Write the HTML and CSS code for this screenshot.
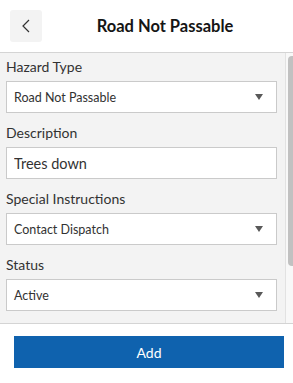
FILE: index.html
```html
<!DOCTYPE html>
<html lang="en">
<head>
    <meta charset="UTF-8">
    <meta name="viewport" content="width=device-width, initial-scale=1.0">
    <title>Road Not Passable</title>
    <link rel="stylesheet" href="styles.css">
</head>
<body>
    <div class="app">
        <header class="topbar">
            <button class="back" aria-label="Back">
                <svg width="8" height="14" viewBox="0 0 8 14">
                    <path d="M7 1 L1 7 L7 13" fill="none" stroke="#323232" stroke-width="1.2"/>
                </svg>
            </button>
            <h1 class="title">Road Not Passable</h1>
        </header>

        <div class="panel">
            <div class="form">
                <div class="field">
                    <label>Hazard Type</label>
                    <div class="select"><span>Road Not Passable</span><span class="arrow"></span></div>
                </div>
                <div class="field">
                    <label>Description</label>
                    <input class="text" type="text" value="Trees down">
                </div>
                <div class="field">
                    <label>Special Instructions</label>
                    <div class="select"><span>Contact Dispatch</span><span class="arrow"></span></div>
                </div>
                <div class="field">
                    <label>Status</label>
                    <div class="select"><span>Active</span><span class="arrow"></span></div>
                </div>
            </div>
            <div class="scrollbar">
                <div class="thumb"></div>
            </div>
        </div>

        <div class="footer">
            <button class="add">Add</button>
        </div>
    </div>
</body>
</html>
```

FILE: styles.css
```css
body {
    margin: 0;
    font-family: Lato, "Open Sans", sans-serif;
    color: #323232;
    background-color: #fff;
}
.app {
    width: 293px;
}
.topbar {
    display: flex;
    align-items: flex-start;
    height: 53px;
    padding-top: 10px;
    box-sizing: border-box;
    border-bottom: 1px solid #d4d4d4;
    background-color: #fff;
}
.back {
    width: 32px;
    height: 32px;
    margin-left: 10px;
    border: none;
    border-radius: 3px;
    background-color: #f3f3f3;
    display: flex;
    align-items: center;
    justify-content: center;
    padding: 0;
}
.title {
    flex: 1;
    margin: 0 5px 0 0;
    text-align: center;
    font-size: 16.5px;
    font-weight: 700;
    line-height: 32px;
    color: #151515;
}
.panel {
    display: flex;
    height: 270px;
    background-color: #f3f3f3;
    border-bottom: 1px solid #d4d4d4;
}
.form {
    flex: 1;
    overflow: hidden;
    padding: 4px 8px 0 6px;
}
.scrollbar {
    width: 7px;
    border-left: 1px solid #e2e2e2;
    background-color: #f8f8f8;
    display: flex;
    justify-content: flex-end;
}
.thumb {
    width: 5px;
    height: 210px;
    margin-top: 3px;
    background-color: #c1c1c1;
    border-radius: 4px 0 0 4px;
}
.field {
    margin-bottom: 10px;
}
.field label {
    display: block;
    font-size: 14px;
    line-height: 20px;
    margin-bottom: 4px;
    color: #323232;
}
.select {
    display: flex;
    align-items: center;
    justify-content: space-between;
    height: 32px;
    box-sizing: border-box;
    border: 1px solid #cacaca;
    background-color: #fff;
    padding: 0 13px 0 7px;
    font-size: 12.5px;
    color: #323232;
}
.arrow {
    width: 0;
    height: 0;
    border-left: 4.5px solid transparent;
    border-right: 4.5px solid transparent;
    border-top: 6px solid #595959;
}
.text {
    display: block;
    width: 100%;
    height: 32px;
    box-sizing: border-box;
    border: 1px solid #cacaca;
    background-color: #fff;
    padding: 0 7px;
    margin: 0;
    font-family: Lato, "Open Sans", sans-serif;
    font-size: 14.5px;
    color: #323232;
}
.footer {
    padding: 12px 9px 0 14px;
}
.add {
    display: block;
    width: 100%;
    height: 32px;
    border: none;
    background-color: #0f62ae;
    color: #fff;
    font-family: Lato, "Open Sans", sans-serif;
    font-size: 14px;
    cursor: pointer;
}
```
